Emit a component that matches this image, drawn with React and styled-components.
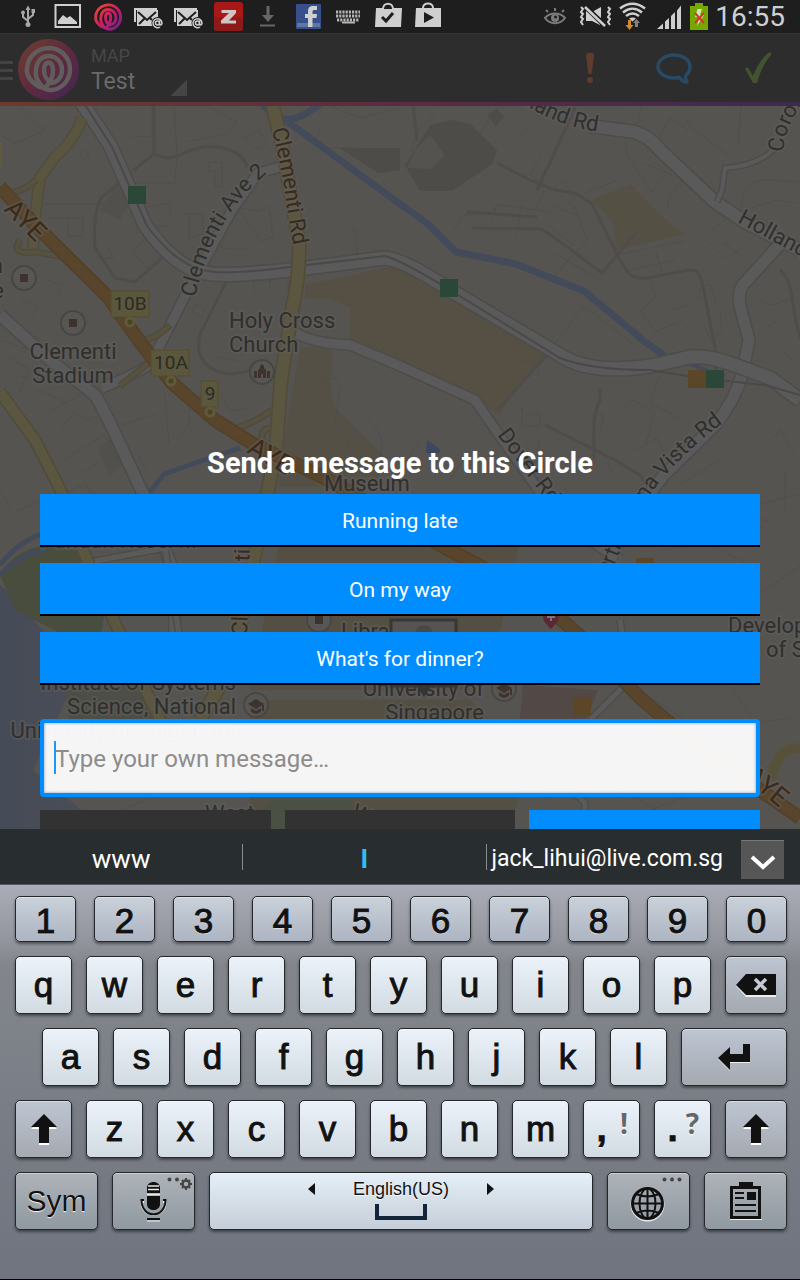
import React from "react";
import styled, { createGlobalStyle, css } from "styled-components";

const GlobalStyle = createGlobalStyle`
  *, *::before, *::after { box-sizing: border-box; }
  body { margin: 0; background: #000; font-family: Roboto, "Liberation Sans", sans-serif; }
  button, input { font: inherit; margin: 0; }
`;

const Screen = styled.div`
  display: flex;
  flex-direction: column;
  min-height: 100vh;
  overflow: hidden;
`;

/* ---------- status bar ---------- */

const StatusBar = styled.header`
  display: flex;
  justify-content: space-between;
  height: 33px;
  padding: 0 15px 0 8px;
  background: #1e1e1e;
  color: #cfcfcf;
`;

const StatusGroup = styled.div`
  display: flex;
  align-items: center;
`;

const StatusIcon = styled.svg`
  display: block;
  flex: none;
  height: 33px;
  width: ${(p) => p.$w || 40}px;
`;

const Clock = styled.time`
  padding-left: 4px;
  font-size: 28px;
  line-height: 33px;
`;

function Icon({ w = 40, children }) {
  return (
    <StatusIcon $w={w} viewBox={`0 0 ${w} 33`} fill="none" aria-hidden="true">
      {children}
    </StatusIcon>
  );
}

const SPIRAL =
  "M49 82C47 88 43 89 38 86C30 81 26 75 27 68C28 56 38 48 49 48C61 48 70 58 70 69C70 81 61 90 50 90C46 90 42 87 40 84C36 79 35 75 36 69C37 61 42 56 49 56C56 56 62 62 62 70C62 78 57 82 51 83C46 80 44 74 44 70C44 60 53 60 53 70C53 75 51 80 49 82";

const MailIcon = () => (
  <Icon>
    <path d="M7 22V9H29" stroke="#cfcfcf" strokeWidth="2" />
    <rect x="9" y="10" width="21" height="16" fill="#cfcfcf" />
    <path d="M10 12l9 8 9-8M11 24l6-6M22 18l2 2" stroke="#1e1e1e" strokeWidth="2" />
    <circle cx="29.500" cy="23" r="6" fill="#1e1e1e" />
    <circle cx="29.500" cy="23" r="2" stroke="#cfcfcf" strokeWidth="1.500" />
    <path d="M31.500 20.500v3.500c0 2 2.500 1 2.500-1a4.500 4.500 0 1 0-2 4" stroke="#cfcfcf" strokeWidth="1.500" />
  </Icon>
);

function StatusIcons() {
  return (
    <StatusGroup>
      <Icon>
        <g stroke="#a8a8a8" strokeWidth="2">
          <path d="M20 8v17M20 21l-5-4v-4M20 19l5-4v-3" />
        </g>
        <path d="M20 5.500l2.500 4.500h-5zM23.500 9h3.500v4h-3.500z" fill="#a8a8a8" />
        <circle cx="15" cy="12.500" r="2" fill="#a8a8a8" />
        <circle cx="20" cy="24.500" r="2.500" fill="#a8a8a8" />
      </Icon>
      <Icon>
        <rect x="7.500" y="5" width="24.500" height="22" stroke="#cfcfcf" strokeWidth="2" />
        <path d="M10 24v-3l5-6 4 3 3-2 7 6v2z" fill="#cfcfcf" />
      </Icon>
      <Icon>
        <defs>
          <linearGradient id="ring" x1="0" y1="0" x2="1" y2="1">
            <stop offset="0" stopColor="#e0502c" />
            <stop offset=".5" stopColor="#cf1d63" />
            <stop offset="1" stopColor="#6d2192" />
          </linearGradient>
        </defs>
        <path d={SPIRAL} stroke="url(#ring)" strokeWidth="5" transform="translate(-8 -23) scale(.58)" />
      </Icon>
      <MailIcon />
      <MailIcon />
      <Icon>
        <rect x="6" y="2" width="29" height="29" rx="3" fill="#a81818" />
        <path d="M6 17h29v11a3 3 0 0 1-3 3H9a3 3 0 0 1-3-3z" fill="#8c1a1a" />
        <path d="M13.500 10h14.500v3l-7 7.500h7v3h-15v-3l8-7.500h-7.500z" fill="#d0c4c4" />
      </Icon>
      <Icon>
        <path d="M18.500 6h3v9h4.500l-6 7-6-7h4.500zM12 24.500h15v2H12z" fill="#666" />
      </Icon>
      <Icon>
        <rect x="8" y="4" width="25" height="25" rx="1" fill="#37508c" />
        <rect x="9" y="23" width="23" height="4" fill="#6076a5" />
        <path d="M20 27V18h-3v-4h3v-2.500c0-4 2-5.500 5-5.500h4v4h-2.500c-1.500 0-2 .5-2 2v2H29l-.5 4h-4v9z" fill="#d0d0d0" />
      </Icon>
      <Icon>
        <path d="M8 12h24M8 16h24M9 20h22" stroke="#b4b4b4" strokeWidth="3" strokeDasharray="2.200 1" />
        <path d="M14 22.500h13" stroke="#b4b4b4" strokeWidth="2" />
      </Icon>
      <Icon>
        <path d="M8 8h26l-1 19H7zM15 9c0-7 10-7 10 0" fill="#cfcfcf" />
        <path d="M15 9c0-7 10-7 10 0" stroke="#cfcfcf" strokeWidth="2" fill="#1e1e1e" />
        <path d="M14 17l4 4 7-8" stroke="#1e1e1e" strokeWidth="3" />
      </Icon>
      <Icon>
        <path d="M8 8h25v19H7z" fill="#cfcfcf" />
        <path d="M15 8c0-6 10-6 10 0" stroke="#cfcfcf" strokeWidth="2" />
        <path d="M16 12l10 5.500L16 23z" fill="#1e1e1e" />
      </Icon>
    </StatusGroup>
  );
}

function SystemIcons() {
  return (
    <StatusGroup>
      <Icon>
        <path d="M10 18c5-6 15-6 20 0-5 7-15 7-20 0z" stroke="#7c7c7c" strokeWidth="2" />
        <circle cx="20" cy="18" r="4" fill="#7c7c7c" />
        <circle cx="20.500" cy="17" r="1.500" fill="#1e1e1e" />
        <path d="M13 12l-2-2M20 11V8M27 12l2-2" stroke="#7c7c7c" strokeWidth="2" />
      </Icon>
      <Icon>
        <path d="M11 22V11l14 11v3l-8-4h-6zM17 12l9-5v11z" fill="#cfcfcf" />
        <path d="M11 7l19 19" stroke="#1e1e1e" strokeWidth="5" />
        <path d="M10 7l20 19" stroke="#cfcfcf" strokeWidth="2.500" />
        <path d="M6 7l2 2-2 3 2 2-2 3 2 2-2 3 2 3M33 7l2 2-2 3 2 2-2 3 2 2-2 3 2 3" stroke="#cfcfcf" strokeWidth="2" />
      </Icon>
      <Icon w={36}>
        <path d="M5 8.500c8-6 17-6 25 0M8 12.500c6-5 13-5 19 0M11 16c4-3 9-3 13 0" stroke="#cfcfcf" strokeWidth="2.500" />
        <path d="M14 18.500c2-1.500 5-1.500 7 0l-3.500 3z" fill="#cfcfcf" />
        <path d="M13 20h3v5h2.500l-4 5-4-5H13z" fill="#d28a2a" />
        <path d="M20 27h3v-4h2l-3.500-4-3.500 4h2z" fill="#828282" />
      </Icon>
      <Icon w={36}>
        <path d="M6 29l6-5.500V29zM14 21.500l4-3.500v11h-4zM20 16l4-4v17h-4zM26 10.500l4-5V29h-4z" fill="#cfcfcf" />
      </Icon>
      <Icon w={24}>
        <path d="M8 3h8v3h5v24H3V6h5z" fill="#74a800" />
        <path d="M13 9h-2.500L8 17h4l-2 9 7-11h-4l2-6z" fill="#d6e2ba" />
        <path d="M8 13l9 10M17 13l-9 10" stroke="#cf3a20" strokeWidth="2" />
      </Icon>
      <Clock>16:55</Clock>
    </StatusGroup>
  );
}

/* ---------- app bar ---------- */

const AppBar = styled.nav`
  display: flex;
  align-items: center;
  height: 69px;
  background: #2d2d2d;
  border-top: 1px solid #353535;
`;

const BarButton = styled.button`
  display: block;
  width: ${(p) => p.$w || 84}px;
  height: 68px;
  padding: 0;
  border: 0;
  background: none;
  svg { display: block; margin: 0 auto; }
`;

const TitleBlock = styled.div`
  flex: 1;
  display: flex;
  align-items: flex-end;
  gap: 36px;
  padding: 4px 0 0 11px;
`;

const TitleText = styled.div`
  color: #6a6a6a;
  font-size: 23px;
  line-height: 28px;
`;

const Eyebrow = styled.div`
  color: #474747;
  font-size: 18px;
  line-height: 24px;
`;

const SpinnerMark = styled.span`
  width: 16px;
  height: 16px;
  background: linear-gradient(135deg, transparent 50%, #454545 50%);
`;

const AccentLine = styled.div`
  height: 4px;
  background: linear-gradient(90deg, #6d3a2e, #5c2b40 50%, #3f2a50);
`;

/* ---------- map ---------- */

const MapArea = styled.main`
  position: relative;
  flex: 1 0 auto;
  display: flex;
  flex-direction: column;
  justify-content: flex-end;
  overflow: hidden;
  background: #565451;
`;

const MapCanvas = styled.svg`
  position: absolute;
  inset: 0;
  width: 100%;
  height: 100%;
  font-family: Roboto, sans-serif;
`;

const Street = styled.path`
  fill: none;
  stroke: #4e4d4b;
  stroke-width: ${(p) => p.$w || 1};
  opacity: ${(p) => (p.$w > 1 ? 1 : 0.7)};
`;

const MapLabel = styled.text`
  fill: ${(p) => p.$color || "#2f2f2e"};
  font-size: ${(p) => p.$size || 22}px;
  text-anchor: ${(p) => p.$anchor || "start"};
  paint-order: stroke;
  stroke: rgba(96, 94, 91, 0.5);
  stroke-width: 4px;
  stroke-linejoin: round;
`;

const Exit = styled.g`
  rect { fill: #5b573c; stroke: #544c2c; }
  text { fill: #2a2a26; font-size: 19px; text-anchor: middle; font-family: Roboto, sans-serif; }
  circle { fill: #4b421f; stroke: #5e593d; stroke-width: 3; }
`;

function Road({ d, w = 11, fill = "#5a5a5a", edge = "#4d4c4a" }) {
  return (
    <g fill="none" strokeLinejoin="round">
      <path d={d} stroke={edge} strokeWidth={w + 3} />
      <path d={d} stroke={fill} strokeWidth={w} />
    </g>
  );
}

const lanes = [
  "M0 135l15 8 25-10 25-25M20 106l24 25M112 106l40-1v32l-21-1M153 106l2 47M174 106l3 48 -2 29h-42M207 106l30 16-12 12-38 8",
  "M42 170v34h62M47 218h36v18h-15v-18M95 258h18l-4-10 8-6M80 155l5-5 4 8-6 2z M170 215v-12l-12 2-16 3v18h28",
  "M209 162h13v25h-7v-16h-6zM244 138l15-8 8 14-12 5zM183 214h20v20l-14 4v-24M237 208l22 3 10-4 4 30-12 4zM215 245l12 4h22",
  "M132 250l14 18 17-15M133 253l12-15 14 5M254 280v12M270 280v10M288 277v12M195 304l10 5-4 8-9-5z",
  "M21 300l17 7-5 10M48 280l14 5-5 12M2 340l27 10M5 355l24 14-10 24M40 390l28 14M50 412l60-35M20 376l12 2M110 405l8 9M120 425l36-11",
  "M60 430l14-18 12 8 18-6M64 460l40-25 14 26M78 475l24-14M84 482l12 22M10 508l-10-18M16 511l66-25M98 503l-12-20M138 455l10 20",
  "M165 395l4 50M189 393v32l-12 14M217 357l25 4M220 391l10 20 20-3M315 383l20-5M320 128l-5 14 12 6h30M345 238l10-10 2 25",
  "M330 106l30 12 40-10M415 106l-1 22M410 152l10-25 15-14M500 106l-30 40M530 125l-14 14M542 155l-12 20 10 7M552 162l-12 20 14 8M625 136l2 18 24 38 15-18M643 163l29 12M682 180l-14 20v10M636 128l6-22M658 140l12-22 18 12M685 117l6 10 40 30M741 106l-3 40",
  "M492 220l5-16 54 8M521 205l-5 32M553 188l10-8 12 20M588 192l30-12M454 230l10-15 30-1v-8M560 195l15 13 12 32-33 36M545 190l-10 20M550 205l30 12M548 225l25 20M554 253l48 28M700 234l25 25 15-10M708 233l35-28M723 242l20 15M742 205c0-18 10-26 26-25l30 2M745 210l32-10 20 3",
  "M617 255l67-14M656 252l6 20M630 270l46-10M650 280l6 18-16 12 15 22 28-12M672 310l16-5M700 300v-12l10-4 6 18M704 325l8 17 10-12-2-20M556 342l27-35 5 2 45 35M620 410l14-10 20 14-8 30M635 450l22-12 10 20M520 360l18 4v14M525 415l15-1v12h-18v-20M590 415h14l-4 20M660 375l-10 28 30 16",
  "M760 300l12 5 20-6M763 330l15-10M780 350l12 10M764 446l16-16 15 25M720 460l-40 24M728 510l42 12M785 470v40M750 600l50-34M690 600l60-25M600 450l14 25M450 480l20-30M700 500l60 4 40-10M660 550l50-6 38 20M610 600l20 40 25 15M700 640l60 90M640 690l60 40 90-12M650 810l80-30M480 735l60 30 90 30 60 34",
  "M355 430l-10 25M368 420c15 12 17 25 10 45M310 400l20-30 10 15-5 40 20 30M420 440l-20 30M530 480l10-40M505 450l30 18 40-10M30 800l70-10M120 810l40-15M100 755l30 12",
];

const streets = [
  "M154 106v48l-20 16M125 178l-24 20c-5 10-8 25-6 50l20 30 20 4 28-25M154 154c20 10 32-5 50-7 20-1 36 3 44 20",
  "M226 282l-25 50c-12 35 22 42 30 42l35-6",
  "M413 106l4 35M497 163l35 18 20 8 25 5 15 10 25 50c10 20 15 26 30 24l42-8c12-1 12 8 15 22l12 60v24",
  "M575 108l-38 82M467 212l70 5M472 228l70 1 28 20 32 24 34-40M600 388v12c-6 12-7 20-6 60",
  "M497 410l50-55M780 270c14 12 10 30 18 60l10 30M545 425l70 35 25 15 20 30",
];

function CityMap() {
  return (
    <MapCanvas viewBox="0 106 800 723" preserveAspectRatio="xMidYMid slice" role="img" aria-label="Map of Clementi">
      <defs>
        <path id="ave" d="M195 298Q207 246 231 212T282 164" />
        <path id="clementi" d="M272 129Q282 170 286 200T297 262" />
        <path id="holland" d="M474 66Q535 124 600 132" />
        <path id="hollandEast" d="M737 222L830 272" />
        <path id="coronation" d="M784 152Q782 130 812 88" />
        <path id="dover" d="M497 435L570 532" />
        <path id="vista" d="M560 640L614 566Q635 510 664 477T730 418" />
        <linearGradient id="sea" x1="0" y1="0" x2="1" y2="0">
          <stop offset="0" stopColor="#454b57" />
          <stop offset="1" stopColor="#4b4e56" />
        </linearGradient>
      </defs>

      <path d="M0 585C30 608 32 625 60 645L66 700L33 770L105 829H0Z" fill="url(#sea)" />
      <path d="M0 575C10 555 30 548 45 545L76 550L104 616L100 645L62 634L15 610Z" fill="#494d3d" />
      <path d="M60 660l80 10 20 60-90-5z" fill="#4d4e47" />
      <path d="M305 285L385 268L400 265L450 290L546 353L498 415L475 398L440 380L350 342V308L330 299H305Z" fill="#555043" />
      <path d="M300 347h30c8 12-5 30 5 60l50 50-10 30H278l10-70z" fill="#555046" />
      <path d="M280 540h240l-20 90-30 60H250z" fill="#544f42" />
      <path d="M250 700h220l60 60-20 69H250z" fill="#534f43" />
      <path d="M592 200L631 184L660 215L684 234L616 250L613 222Z" fill="#545043" />
      <path d="M405 165L430 125L452 120L470 124L497 150L492 164L452 191H420Z" fill="#4d4c49" />
      <path d="M407 168l8-18 15-15 15 20-14 14z" fill="#555350" />
      <path d="M340 148h60v22l-22 3z M487 115l10-6 7 8-8 9z" fill="#4d4c49" />
      <path d="M100 210l20-30 15 15-15 25zM98 450l14-14 10 10v20l-12 10z" fill="#51504d" />
      <path d="M523 685l75 5-20 50h-60z" fill="#524946" />
      <path d="M270 800h80l20 29H250z" fill="#4b5044" />

      {lanes.map((d) => <Street key={d} d={d} />)}
      {streets.map((d) => <Street key={d} d={d} $w={3} />)}

      <g fill="none" stroke="#434b5a">
        <path d="M260 102l14 14c12 8 30 2 48-14M288 122l112 82 28 20 28 28 60 12 68 27 60 50 25 18" strokeWidth="7" />
        <path d="M688 363l22 9 15 3" strokeWidth="4" />
        <path d="M0 565q20-25 45-32M0 575q20-20 45-25M150 492l14-18 40-14 36-12" strokeWidth="5" />
      </g>
      <path d="M427 440l6 4 7 5-1 4h-13z" fill="#3d4860" />

      <Road d="M0 315L50 360L95 395Q102 405 125 455L145 498L175 575V640" />
      <Road d="M280 167L258 173L232 210L186 294L160 345L150 364Q140 372 102 388" w={9} />
      <Road d="M295 332Q310 343 350 345L400 366L475 400L497 432L560 520L620 560" w={9} />
      <Road d="M590 126L635 132Q650 137 660 150L715 202L745 222L800 250" w={12} />
      <Road d="M780 244L742 286Q737 296 741 310L749 340L742 375Q735 400 715 425L664 475L630 520L590 600" w={11} />
      <Road d="M775 148Q758 166 725 168L722 190L717 202" w={4} />
      <Road d="M80 100L110 145L130 190L145 225Q175 268 205 273Q225 277 290 270L385 258Q405 260 450 290L560 355Q590 375 650 366L690 357Q710 355 740 367L770 378L800 400" w={13} />
      <path d="M82 100L112 147L132 192L147 226Q177 266 207 271Q230 275 290 267L385 256Q405 262 450 290L560 358Q590 370 650 370L700 378L765 385L800 395" fill="none" stroke="#4a4948" strokeWidth="2" />
      <Road d="M90 562L165 548L180 640M620 620l10 60-40 40M545 795q20-15 40 8v26" w={5} />

      <Road d="M82 118Q75 140 55 157L40 178Q35 210 33 250" w={9} fill="#59553f" edge="#524d3b" />
      <Road d="M0 193Q20 195 36 180M20 240Q10 255 35 252L60 256M140 340Q155 340 170 325M120 386L152 360M232 430Q260 420 272 410M265 450q-8-20 5-22" w={4} fill="#575140" edge="#504b3d" />
      <Road d="M0 392L35 440L63 495L85 555L116 625L148 695L170 740" w={10} fill="#5a563f" edge="#514b38" />
      <Road d="M272 102L283 150L299 242Q300 275 292 310L281 380L276 450L262 520L245 600L235 660L200 720" w={12} fill="#5a563f" edge="#514b38" />
      <Road d="M0 187L40 230L108 297L140 342L172 383L215 420L255 445L325 478L440 545L480 566L545 605L590 645L640 698L690 740L760 790L800 818" w={11} fill="#59452b" edge="#524028" />
      <path d="M770 780q8-30 24-32l10 2" fill="none" stroke="#57513a" strokeWidth="10" />
      <path d="M0 142h2v27h-2z" fill="#5f5a3a" />

      <g fill="#2b4738">
        <rect x="128" y="186" width="18" height="18" />
        <rect x="440" y="279" width="18" height="18" />
        <rect x="706" y="370" width="18" height="18" />
      </g>
      <g fill="#5b4728">
        <rect x="688" y="370" width="18" height="18" />
        <rect x="573" y="697" width="18" height="18" />
        <rect x="636" y="558" width="18" height="18" />
      </g>

      {[[24, 278], [73, 323], [319, 620]].map(([x, y]) => (
        <g key={x}>
          <circle cx={x} cy={y} r="12" fill="#585653" stroke="#474645" strokeWidth="2" />
          <rect x={x - 4} y={y - 4} width="8" height="8" fill="#3d322e" />
        </g>
      ))}
      <circle cx="262" cy="372" r="12" fill="#585653" stroke="#474645" strokeWidth="2" />
      <path d="M254 371h3v7h-3zM267 371h3v7h-3zM258 378v-8l2-2v-2l2-2 2 2v2l2 2v8h-3v-4h-2v4z" fill="#3d322e" />
      {[[256, 705], [504, 689]].map(([x, y]) => (
        <g key={x} transform={`translate(${x} ${y})`}>
          <circle r="12" fill="#585653" stroke="#474645" strokeWidth="2" />
          <path d="M-8-1l8-5 8 5-8 5zM-5 3l5 3 5-3v4l-5 2-5-2zM6 0h2v6h-2z" fill="#3d322e" />
        </g>
      ))}
      <path d="M551 629c-6-7-8-8-8-13 0-9 16-9 16 0 0 5-2 6-8 13z" fill="#5b2733" />
      <path d="M551 613v8M547 617h8" stroke="#777" strokeWidth="2" />

      <Exit>
        <rect x="111" y="291" width="38" height="26" /><text x="130" y="310">10B</text><circle cx="130" cy="322" r="4" />
        <rect x="151" y="350" width="38" height="26" /><text x="171" y="369">10A</text><circle cx="171" cy="381" r="4" />
        <rect x="201" y="381" width="17" height="26" /><text x="210" y="400">9</text><circle cx="210" cy="412" r="4" />
      </Exit>

      <MapLabel $size={22}><textPath href="#ave">Clementi Ave 2</textPath></MapLabel>
      <MapLabel $size={22} $color="#382a1f"><textPath href="#clementi">Clementi Rd</textPath></MapLabel>
      <MapLabel $size={22} $anchor="end"><textPath href="#holland" startOffset="98%">Holland Rd</textPath></MapLabel>
      <MapLabel $size={22}><textPath href="#hollandEast">Holland</textPath></MapLabel>
      <MapLabel $size={22}><textPath href="#coronation">Coron</textPath></MapLabel>
      <MapLabel $size={22}><textPath href="#dover">Dover Rd</textPath></MapLabel>
      <MapLabel $size={22} $anchor="end"><textPath href="#vista" startOffset="97%">North Buona Vista Rd</textPath></MapLabel>
      <MapLabel $size={26} $color="#3b2919" transform="translate(3 210) rotate(45)">AYE</MapLabel>
      <MapLabel $size={26} $color="#3b2919" transform="translate(246 452) rotate(30)">AYE</MapLabel>
      <MapLabel $size={26} $color="#3b2919" transform="translate(744 778) rotate(40)">AYE</MapLabel>
      <MapLabel $color="#382a1f" transform="translate(247 636) rotate(-88)">Clementi</MapLabel>
      <MapLabel $anchor="middle" x="73" y="359">Clementi</MapLabel>
      <MapLabel $anchor="middle" x="73" y="383">Stadium</MapLabel>
      <MapLabel x="229" y="328">Holy Cross</MapLabel>
      <MapLabel x="229" y="352">Church</MapLabel>
      <MapLabel x="324" y="491">Museum</MapLabel>
      <MapLabel x="341" y="639">Library</MapLabel>
      <MapLabel x="40" y="548">Pandan Reserv..</MapLabel>
      <MapLabel $anchor="end" x="236" y="690">Institute of Systems</MapLabel>
      <MapLabel $anchor="end" x="236" y="714">Science, National</MapLabel>
      <MapLabel $anchor="end" x="236" y="738">University of Singapore</MapLabel>
      <MapLabel $anchor="end" x="484" y="696">University of</MapLabel>
      <MapLabel $anchor="end" x="484" y="720">Singapore</MapLabel>
      <MapLabel x="728" y="633">Develop</MapLabel>
      <MapLabel x="766" y="657">of Sin</MapLabel>
      <MapLabel $anchor="end" x="3" y="273">n</MapLabel>
      <MapLabel $anchor="end" x="4" y="298">e</MapLabel>
      <MapLabel x="205" y="821">West</MapLabel>
      <MapLabel $color="#382a1f" transform="translate(350 817) rotate(25)">We</MapLabel>

      <g>
        <rect x="391" y="620" width="65" height="66" fill="#555452" stroke="#373736" strokeWidth="3" />
        <circle cx="424" cy="634" r="9" fill="#494847" />
        <path d="M416 685h16l-8 12z" fill="#353534" />
      </g>
    </MapCanvas>
  );
}

/* ---------- message form ---------- */

const MessageForm = styled.form`
  position: relative;
  display: flex;
  flex-direction: column;
  gap: 16px;
  padding: 340px 40px 0;
`;

const FormTitle = styled.h1`
  margin: 0;
  color: #fff;
  font-size: 29px;
  font-weight: 700;
  line-height: 30px;
  text-align: center;
`;

const QuickMessage = styled.button`
  height: 53px;
  padding: 2px 16px 0;
  border: 0;
  border-bottom: 2px solid #000;
  background: #008dff;
  color: #fff;
  font-size: 21px;
  line-height: 28px;
`;

const InputWrap = styled.div`
  position: relative;
  margin-top: 18px;
`;

const MessageInput = styled.input`
  display: block;
  width: 100%;
  height: 78px;
  padding: 1px 11px 0;
  border: 4px solid #008dff;
  border-radius: 4px;
  outline: 0;
  background: rgba(251, 251, 251, 0.97);
  box-shadow: inset 0 0 3px rgba(0, 60, 120, 0.5);
  color: #222;
  font-size: 24px;
  &::placeholder { color: #8c8c8c; opacity: 1; }
`;

const Caret = styled.span`
  position: absolute;
  left: 14px;
  top: 22px;
  width: 2px;
  height: 33px;
  background: #1f96f5;
`;

const Actions = styled.div`
  display: grid;
  grid-template-columns: repeat(3, 1fr);
  gap: 14px;
  height: 53px;
  margin: -3px 0 -34px;
`;

const Action = styled.button`
  border: 0;
  border-bottom: 2px solid #000;
  background: ${(p) => (p.$primary ? "#008dff" : "#333232")};
`;

/* ---------- keyboard ---------- */

const Suggestions = styled.div`
  display: flex;
  align-items: center;
  height: 56px;
  padding-right: 16px;
  background: #282d30;
  border-bottom: 1px solid #55585c;
`;

const Suggestion = styled.button`
  height: 26px;
  padding: 2px 0 0;
  border: 0;
  border-right: ${(p) => (p.$last ? "0" : "1px solid #8a8d8f")};
  flex: ${(p) => (p.$last ? "0 1 auto" : "1 1 0")};
  margin-right: ${(p) => (p.$last ? "18px" : "0")};
  padding-left: ${(p) => (p.$last ? "5px" : "0")};
  background: none;
  color: ${(p) => (p.$active ? "#33bdf5" : "#fff")};
  font-size: ${(p) => (p.$last ? 23 : 26)}px;
  font-weight: ${(p) => (p.$active ? 700 : 400)};
  line-height: 26px;
`;

const Collapse = styled.button`
  width: 43px;
  height: 39px;
  margin-top: 6px;
  padding: 6px 0 0;
  border: 0;
  border-top: 1px solid #777;
  background: #565656;
  svg { display: block; margin: 0 auto; }
`;

const Keyboard = styled.section`
  display: flex;
  flex-direction: column;
  gap: 14px;
  padding: 11px 13px 49px 15px;
  border-bottom: 1px solid #000;
  background: linear-gradient(#aaadb7, #92959d 55px, #82868c 80px, #7b7f87 50%, #6f747f);
`;

const KeyRow = styled.div`
  display: flex;
  gap: ${(p) => (p.$wide ? 18 : 14)}px;
  padding-left: ${(p) => (p.$indent ? 27 : 0)}px;
`;

const tones = {
  letter: css`background: linear-gradient(#ebf2fa, #d3dbe2);`,
  number: css`background: linear-gradient(#c9d1da, #adb4c2);`,
  control: css`background: linear-gradient(#bdc5d2, #a5a9b0);`,
  system: css`background: linear-gradient(#adb3b8, #9098a1);`,
  space: css`background: linear-gradient(#e4eff6, #c6ced9);`,
};

/* the 1px borders on both sides already count towards each key's share */
const Key = styled.button`
  position: relative;
  flex: ${(p) => (p.$span || 57) - 2} 1 0;
  min-width: 0;
  height: ${(p) => (p.$tone === "number" ? 46 : 58)}px;
  padding: ${(p) => (p.$tone === "number" ? "3px" : "0")} 0 0;
  border: 1px solid #25272a;
  border-radius: 5px;
  box-shadow: 0 2px 3px rgba(0, 0, 0, 0.45), inset 0 1px 0 rgba(255, 255, 255, 0.4);
  color: #111;
  font-family: "Liberation Sans", Arial, sans-serif;
  font-size: ${(p) => (p.$small ? 30 : 35)}px;
  line-height: 40px;
  text-align: center;
  text-shadow: 0 1px 1px rgba(255, 255, 255, 0.9);
  -webkit-text-stroke: ${(p) => (p.$small ? "0" : "1px #111")};
  ${(p) => tones[p.$tone || "letter"]}
  svg { display: block; margin: 0 auto; }
`;

const Punctuation = styled.span`
  display: block;
  padding-right: 20px;
  font-weight: 700;
`;

const Hint = styled.span`
  position: absolute;
  top: 4px;
  right: 11px;
  color: #666;
  font-family: "Open Sans", sans-serif;
  font-size: 28px;
  font-weight: 700;
  line-height: 36px;
  -webkit-text-stroke: 0;
`;

const Language = styled.span`
  display: flex;
  justify-content: center;
  align-items: center;
  gap: 38px;
  padding-bottom: 4px;
  font-size: 18px;
  line-height: 22px;
  -webkit-text-stroke: 0;
  svg { margin: 0; }
`;

const SpaceMark = styled.svg`
  padding-bottom: 4px;
  box-sizing: content-box;
`;

const ShiftKey = ({ span }) => (
  <Key type="button" $tone="control" $span={span} aria-label="Shift">
    <svg width="26" height="32" viewBox="0 0 26 32">
      <path d="M13 2l13 13h-8v16H8V15H0z" fill="#fff" transform="translate(0 1)" />
      <path d="M13 1l13 13h-8v16H8V14H0z" fill="#111" />
    </svg>
  </Key>
);

const letters = (row) => row.split("").map((c) => <Key type="button" key={c}>{c}</Key>);

export default function App() {
  return (
    <Screen>
      <GlobalStyle />
      <StatusBar>
        <StatusIcons />
        <SystemIcons />
      </StatusBar>

      <AppBar>
        <BarButton type="button" $w={80} aria-label="Menu">
          <svg width="80" height="68" viewBox="0 34 80 68">
            <defs>
              <linearGradient id="logo" x1="0" y1="0" x2="1" y2="1">
                <stop offset="0.100" stopColor="#6a3b30" />
                <stop offset="0.500" stopColor="#5f2a3e" />
                <stop offset="0.900" stopColor="#452750" />
              </linearGradient>
            </defs>
            <path d="M0 61h13v3H0zM0 69h13v3H0zM0 77h13v3H0z" fill="#434343" />
            <circle cx="48.500" cy="69.500" r="30.500" fill="url(#logo)" />
            <path d={SPIRAL} fill="none" stroke="#615d5d" strokeWidth="4.500" />
          </svg>
        </BarButton>
        <TitleBlock>
          <TitleText>
            <Eyebrow>MAP</Eyebrow>
            Test
          </TitleText>
          <SpinnerMark />
        </TitleBlock>
        <BarButton type="button" aria-label="Alert">
          <svg width="12" height="32" viewBox="0 0 12 32" fill="#633a2e">
            <path d="M2 3c0-3 8-3 8 0L8 20c0 3-4 3-4 0z" />
            <circle cx="6" cy="28" r="3" />
          </svg>
        </BarButton>
        <BarButton type="button" aria-label="Messages">
          <svg width="36" height="32" viewBox="0 0 36 32" fill="none" stroke="#284a64" strokeWidth="3.500" strokeLinejoin="round">
            <path d="M18 3C9 3 2 8 2 14.500S9 26 18 26c2 0 4 0 5-1 2 3 4 5 8 5-2-3-2-5-1-7 3-2 4-5 4-8.500C34 8 27 3 18 3z" />
          </svg>
        </BarButton>
        <BarButton type="button" aria-label="Check in">
          <svg width="28" height="32" viewBox="0 0 28 32">
            <path d="M1 17c1-2 3-2 4 0l4 7C13 14 18 6 24 1c2-1 4 0 3 2C20 11 16 20 13 31H9z" fill="#44532f" />
          </svg>
        </BarButton>
      </AppBar>
      <AccentLine />

      <MapArea>
        <CityMap />
        <MessageForm onSubmit={(e) => e.preventDefault()}>
          <FormTitle>Send a message to this Circle</FormTitle>
          <QuickMessage type="button">Running late</QuickMessage>
          <QuickMessage type="button">On my way</QuickMessage>
          <QuickMessage type="button">What's for dinner?</QuickMessage>
          <InputWrap>
            <MessageInput type="text" aria-label="Your own message" placeholder="Type your own message…" />
            <Caret />
          </InputWrap>
          <Actions>
            <Action type="button" aria-label="Cancel" />
            <Action type="button" aria-label="Clear" />
            <Action type="submit" $primary aria-label="Send" />
          </Actions>
        </MessageForm>
      </MapArea>

      <Suggestions>
        <Suggestion type="button">www</Suggestion>
        <Suggestion type="button" $active>I</Suggestion>
        <Suggestion type="button" $last>jack_lihui@live.com.sg</Suggestion>
        <Collapse type="button" aria-label="Collapse suggestions">
          <svg width="26" height="18" viewBox="0 0 26 18" fill="none">
            <path d="M2 3l11 10L24 3" stroke="#fff" strokeWidth="4" />
          </svg>
        </Collapse>
      </Suggestions>

      <Keyboard aria-label="Keyboard">
        <KeyRow $wide>
          {"1234567890".split("").map((n) => (
            <Key type="button" key={n} $tone="number">{n}</Key>
          ))}
        </KeyRow>
        <KeyRow>
          {letters("qwertyuiop")}
          <Key type="button" $tone="control" $span={62} aria-label="Backspace">
            <svg width="40" height="24" viewBox="0 0 40 24">
              <path d="M0 13L10 2h30v22H10z" fill="#eee" />
              <path d="M0 12L10 1h30v21H10z" fill="#111" />
              <path d="M19 6l11 11M30 6L19 17" stroke="#c3c8d2" strokeWidth="3.500" />
            </svg>
          </Key>
        </KeyRow>
        <KeyRow $indent>
          {letters("asdfghjkl")}
          <Key type="button" $tone="control" $span={106} aria-label="Enter">
            <svg width="32" height="28" viewBox="0 0 32 28">
              <path d="M0 15L12 4v7h13V1h7v18H12v8z" fill="#eee" transform="translate(0 1)" />
              <path d="M0 15L12 4v7h13V1h7v18H12v8z" fill="#111" />
            </svg>
          </Key>
        </KeyRow>
        <KeyRow>
          <ShiftKey />
          {letters("zxcvbnm")}
          <Key type="button"><Punctuation>,</Punctuation><Hint>!</Hint></Key>
          <Key type="button"><Punctuation>.</Punctuation><Hint>?</Hint></Key>
          <ShiftKey span={62} />
        </KeyRow>
        <KeyRow>
          <Key type="button" $tone="system" $span={83} $small>Sym</Key>
          <Key type="button" $tone="system" $span={83} aria-label="Voice input">
            <svg width="81" height="56" viewBox="0 0 81 56" fill="none">
              <path d="M34 15c0-8 13-8 13 0v5H34zM34 23h13v8c0 8-13 8-13 0z" fill="#111" />
              <path d="M35 13h11M35 16.500h11M34 21.500h13" stroke="#e8eaec" strokeWidth="1.500" />
              <path d="M31 28h-2.500c0 17 24 17 24 0H50" stroke="#eee" strokeWidth="2" transform="translate(0 1)" />
              <path d="M31 27h-2.500c0 19 24 19 24 0H50" stroke="#111" strokeWidth="2" />
              <path d="M34 46h13" stroke="#111" strokeWidth="2" />
              <path d="M34 48h13" stroke="#eee" />
              <circle cx="56.500" cy="6.500" r="2" fill="#444" />
              <circle cx="64" cy="6.500" r="2" fill="#444" />
              <circle cx="73" cy="11" r="3.500" stroke="#444" strokeWidth="2.500" />
              <path d="M73 5v2M73 15v2M67 11h2M77 11h2M69 7l1 1M76 14l1 1M69 15l1-1M76 8l1-1" stroke="#444" strokeWidth="2" />
            </svg>
          </Key>
          <Key type="button" $tone="space" $span={384} aria-label="Space, English(US)">
            <Language>
              <svg width="7" height="12" viewBox="0 0 7 12"><path d="M7 0v12L0 6z" fill="#111" /></svg>
              English(US)
              <svg width="7" height="12" viewBox="0 0 7 12"><path d="M0 0v12l7-6z" fill="#111" /></svg>
            </Language>
            <SpaceMark width="52" height="16" viewBox="0 0 52 16"><path d="M2 0v14h48V0" fill="none" stroke="#10253a" strokeWidth="4" /></SpaceMark>
          </Key>
          <Key type="button" $tone="system" $span={83} aria-label="Change language">
            <svg width="81" height="56" viewBox="0 0 81 56" fill="none">
              <circle cx="39.500" cy="31.500" r="15.500" stroke="#e5e8ea" strokeWidth="3" />
              <g stroke="#111" strokeWidth="2">
                <circle cx="39.500" cy="30.500" r="15" strokeWidth="3" />
                <ellipse cx="39.500" cy="30.500" rx="8" ry="15" />
                <path d="M39.500 15v31M24 30.500h31M28 21q11.500 5 23 0M28 40q11.500-5 23 0" />
              </g>
              <circle cx="56.500" cy="6.500" r="2" fill="#444" />
              <circle cx="64" cy="6.500" r="2" fill="#444" />
              <circle cx="71.500" cy="6.500" r="2" fill="#444" />
            </svg>
          </Key>
          <Key type="button" $tone="system" $span={83} aria-label="Clipboard">
            <svg width="32" height="38" viewBox="0 0 32 38">
              <path d="M0 37h32v1H0z" fill="#eee" />
              <path d="M9 0h14v4h8v33H0V4h9zM3 7v27h25V7z" fill="#111" fillRule="evenodd" />
              <path d="M17 10h9v8h-9zM5 10h9v2H5zM5 15h9v2H5zM5 22h21v2H5zM5 28h21v2H5z" fill="#111" />
            </svg>
          </Key>
        </KeyRow>
      </Keyboard>
    </Screen>
  );
}
